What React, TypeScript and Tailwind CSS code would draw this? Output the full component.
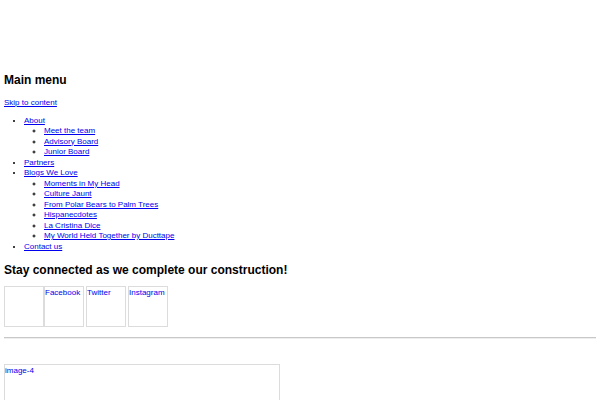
const aboutLinks = ["Meet the team", "Advisory Board", "Junior Board"];
const blogLinks = [
  "Moments in My Head",
  "Culture Jaunt",
  "From Polar Bears to Palm Trees",
  "Hispanecdotes",
  "La Cristina Dice",
  "My World Held Together by Ducttape",
];

function Link({ children }: { children: React.ReactNode }) {
  return (
    <a href="#" className="text-[#0000ee] underline">
      {children}
    </a>
  );
}

function Social({ label }: { label?: string }) {
  return (
    <div className="w-[40px] h-[41px] border border-[#dcdcdc] text-[#0000ee] leading-[10px] pt-[1px] overflow-hidden whitespace-nowrap">
      {label}
    </div>
  );
}

export default function App() {
  return (
    <div className="bg-white h-[400px] px-[4px] pt-[73px] text-black text-[8px] leading-[10.5px] font-['Liberation_Sans',Arial,sans-serif] overflow-hidden">
      {/* Main navigation */}
      <h2 className="text-[12px] leading-[14px] font-bold">Main menu</h2>
      <div className="mt-[11px]">
        <Link>Skip to content</Link>
      </div>

      <ul className="list-disc pl-[20px] mt-[7px]">
        <li>
          <Link>About</Link>
          <ul className="list-[circle] pl-[20px]">
            {aboutLinks.map((l) => (
              <li key={l}>
                <Link>{l}</Link>
              </li>
            ))}
          </ul>
        </li>
        <li>
          <Link>Partners</Link>
        </li>
        <li>
          <Link>Blogs We Love</Link>
          <ul className="list-[circle] pl-[20px]">
            {blogLinks.map((l) => (
              <li key={l}>
                <Link>{l}</Link>
              </li>
            ))}
          </ul>
        </li>
        <li>
          <Link>Contact us</Link>
        </li>
      </ul>

      {/* Social */}
      <h2 className="text-[12px] leading-[14px] font-bold mt-[11px]">
        Stay connected as we complete our construction!
      </h2>
      <div className="flex mt-[9px] gap-[2px]">
        <div className="flex">
          <Social />
          <Social label="Facebook" />
        </div>
        <Social label="Twitter" />
        <Social label="Instagram" />
      </div>

      <hr className="mt-[10px] border-t border-b border-t-[#c8c8c8] border-b-[#eeeeee]" />

      <div className="mt-[25px] w-[276px] h-[60px] border border-[#dcdcdc] text-[#0000ee] leading-[10px] pt-[1px]">
        image-4
      </div>
    </div>
  );
}
